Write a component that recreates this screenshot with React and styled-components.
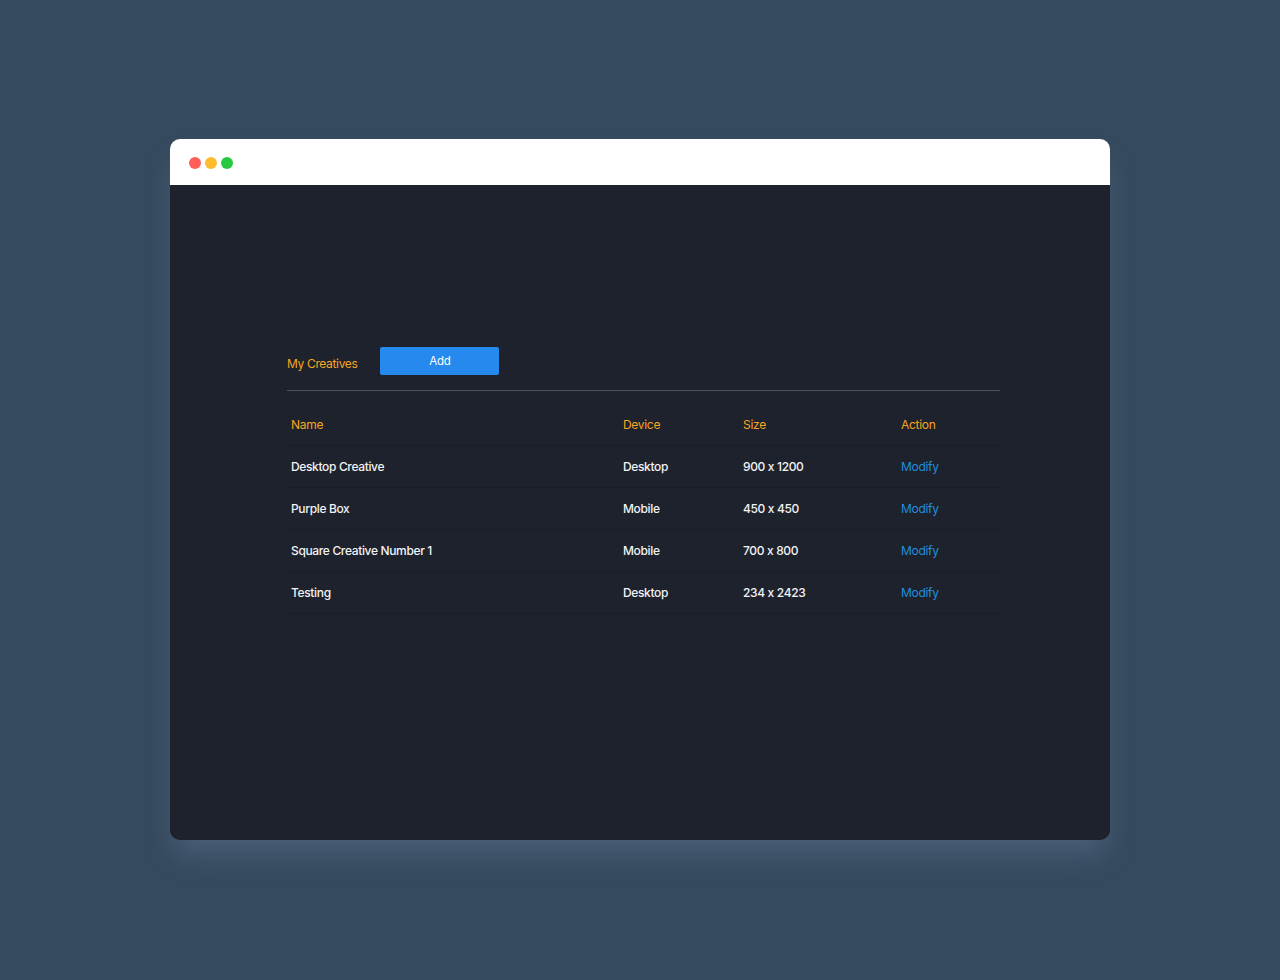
import React from "react";
import styled, { createGlobalStyle } from "styled-components";

const GlobalStyle = createGlobalStyle`
  html, body { margin: 0; padding: 0; }
  body {
    background: #364a5f;
    font-family: Inter, "Noto Sans", "Liberation Sans", sans-serif;
    font-feature-settings: "calt" 0;
    -webkit-font-smoothing: antialiased;
  }
`;

const Page = styled.div`
  width: 1280px;
  height: 980px;
  box-sizing: border-box;
  padding-top: 139px;
  display: flex;
  justify-content: center;
  align-items: flex-start;
`;

const Window = styled.div`
  width: 940px;
  height: 701px;
  border-radius: 10px;
  overflow: hidden;
  display: flex;
  flex-direction: column;
  box-shadow: 0 18px 28px -6px rgba(110, 130, 160, 0.4);
`;

const TitleBar = styled.div`
  height: 46px;
  flex: none;
  background: #ffffff;
  display: flex;
  align-items: center;
  gap: 4px;
  padding-left: 19px;
  padding-top: 1px;
  box-sizing: border-box;
`;

const Dot = styled.span`
  width: 12px;
  height: 12px;
  border-radius: 50%;
  background: ${(p) => p.$color};
`;

const Body = styled.div`
  flex: 1;
  background: #1e222c;
  padding: 162px 110px 0 117px;
`;

const Toolbar = styled.div`
  display: flex;
  align-items: center;
  gap: 23px;
  padding-bottom: 15px;
  border-bottom: 1px solid #4d525b;
`;

const Title = styled.span`
  color: #f5a623;
  font-size: 12px;
  letter-spacing: -0.35px;
  margin-top: 5px;
`;

const AddButton = styled.button`
  width: 119px;
  height: 28px;
  border: none;
  border-radius: 2px;
  background: #2589ee;
  color: #ffffff;
  font-family: inherit;
  font-size: 11.5px;
  font-weight: 400;
  letter-spacing: -0.2px;
  padding: 0;
`;

const Table = styled.div`
  margin-top: 13px;
  display: grid;
  grid-template-columns: 332px 120px 158px 1fr;
`;

const Cell = styled.div`
  height: 42px;
  box-sizing: border-box;
  display: flex;
  align-items: center;
  padding: 0 4px;
  border-bottom: 1px solid #191d25;
  font-size: 12px;
  letter-spacing: ${(p) => (p.$head || p.$link ? "-0.3px" : "-0.35px")};
  color: ${(p) => (p.$head ? "#f5a623" : p.$link ? "#1f8fdf" : "#f2f3f5")};
  font-weight: ${(p) => (p.$head || p.$link ? 400 : 450)};
`;

const rows = [
  ["Desktop Creative", "Desktop", "900 x 1200"],
  ["Purple Box", "Mobile", "450 x 450"],
  ["Square Creative Number 1", "Mobile", "700 x 800"],
  ["Testing", "Desktop", "234 x 2423"],
];

export default function App() {
  return (
    <>
      <GlobalStyle />
      <Page>
        <Window>
          <TitleBar>
            <Dot $color="#ff5f57" />
            <Dot $color="#febc2e" />
            <Dot $color="#28c840" />
          </TitleBar>
          <Body>
            <Toolbar>
              <Title>My Creatives</Title>
              <AddButton>Add</AddButton>
            </Toolbar>
            <Table>
              <Cell $head>Name</Cell>
              <Cell $head>Device</Cell>
              <Cell $head>Size</Cell>
              <Cell $head>Action</Cell>
              {rows.map((r) => (
                <React.Fragment key={r[0]}>
                  <Cell>{r[0]}</Cell>
                  <Cell>{r[1]}</Cell>
                  <Cell>{r[2]}</Cell>
                  <Cell $link>Modify</Cell>
                </React.Fragment>
              ))}
            </Table>
          </Body>
        </Window>
      </Page>
    </>
  );
}
